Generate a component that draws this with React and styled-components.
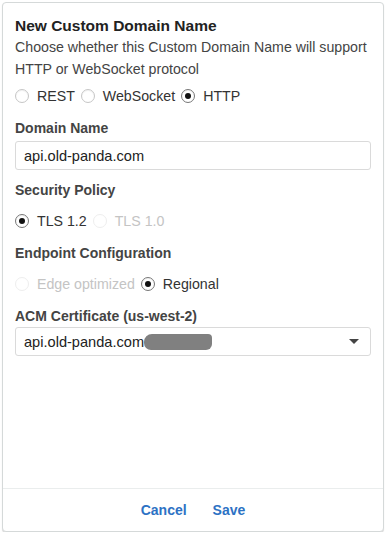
import React from "react";
import styled, { createGlobalStyle } from "styled-components";

const Global = createGlobalStyle`
  html, body { margin: 0; padding: 0; background: #fff; }
  body { font-family: "Liberation Sans", Arial, sans-serif; color: #444; }
`;

const Card = styled.div`
  box-sizing: border-box;
  margin: 2px 0 0 2px;
  width: 382px;
  height: 530px;
  border: 1px solid #d5d9d9;
  border-radius: 4px;
  box-shadow: 0 1px 1px rgba(0,0,0,0.15);
  display: flex;
  flex-direction: column;
  background: #fff;
`;

const Body = styled.div`
  flex: 1;
  padding: 12px 12px 0 12px;
  display: flex;
  flex-direction: column;
`;

const Title = styled.div`
  font-size: 15.5px;
  font-weight: bold;
  color: #222;
  line-height: 22px;
`;

const Desc = styled.div`
  font-size: 14.2px;
  color: #444;
  line-height: 22px;
  margin-top: -1px;
`;

const RadioRow = styled.div`
  display: flex;
  align-items: center;
  height: 20px;
  margin-top: ${p => p.$mt || 0}px;
`;

const RadioItem = styled.label`
  display: flex;
  align-items: center;
  font-size: 14.2px;
  color: ${p => (p.$disabled ? "#c4c4c4" : "#333")};
  margin-right: 6px;
`;

const Circle = styled.span`
  box-sizing: border-box;
  width: 14px;
  height: 14px;
  border-radius: 50%;
  border: 1px solid ${p => (p.$disabled ? "#eee" : p.$checked ? "#777" : "#c6c6c6")};
  background: #fff;
  display: inline-flex;
  align-items: center;
  justify-content: center;
  margin-right: 8px;
  box-shadow: ${p => (p.$disabled ? "none" : "inset 0 1px 1px rgba(0,0,0,0.06)")};
  &::after {
    content: "";
    display: ${p => (p.$checked ? "block" : "none")};
    width: 6px;
    height: 6px;
    border-radius: 50%;
    background: #111;
  }
`;

const Label = styled.div`
  font-size: 14px;
  font-weight: bold;
  color: #444;
  line-height: 18px;
  margin-top: ${p => p.$mt}px;
`;

const Field = styled.div`
  box-sizing: border-box;
  height: 29px;
  margin-top: ${p => p.$mt || 6}px;
  border: 1px solid #dadada;
  border-radius: 3px;
  padding: 0 8px;
  display: flex;
  align-items: center;
  font-size: 14.6px;
  color: #222;
`;

const Redact = styled.span`
  display: inline-block;
  width: 68px;
  height: 16px;
  background: #808080;
  border-radius: 8px 4px 6px 7px;
`;

const Caret = styled.span`
  margin-left: auto;
  margin-right: 3px;
  width: 0;
  height: 0;
  border-left: 5px solid transparent;
  border-right: 5px solid transparent;
  border-top: 5px solid #444;
`;

const Footer = styled.div`
  border-top: 1px solid #eaeded;
  height: 42px;
  display: flex;
  justify-content: center;
  align-items: center;
  gap: 26px;
`;

const LinkButton = styled.button`
  background: none;
  border: none;
  padding: 0;
  font-family: inherit;
  font-size: 14px;
  font-weight: bold;
  color: #2d72c4;
  cursor: pointer;
`;

function Radio({ label, checked, disabled }) {
  return (
    <RadioItem $disabled={disabled}>
      <Circle $checked={checked} $disabled={disabled} />
      {label}
    </RadioItem>
  );
}

export default function App() {
  return (
    <>
      <Global />
      <Card>
        <Body>
          <Title>New Custom Domain Name</Title>
          <Desc>
            Choose whether this Custom Domain Name will support HTTP or WebSocket protocol
          </Desc>
          <RadioRow $mt={6}>
            <Radio label="REST" />
            <Radio label="WebSocket" />
            <Radio label="HTTP" checked />
          </RadioRow>
          <Label $mt={13}>Domain Name</Label>
          <Field $mt={4}>api.old-panda.com</Field>
          <Label $mt={11}>Security Policy</Label>
          <RadioRow $mt={12}>
            <Radio label="TLS 1.2" checked />
            <Radio label="TLS 1.0" disabled />
          </RadioRow>
          <Label $mt={13}>Endpoint Configuration</Label>
          <RadioRow $mt={12}>
            <Radio label="Edge optimized" disabled />
            <Radio label="Regional" checked />
          </RadioRow>
          <Label $mt={13}>ACM Certificate (us-west-2)</Label>
          <Field $mt={2}>
            api.old-panda.com<Redact />
            <Caret />
          </Field>
        </Body>
        <Footer>
          <LinkButton>Cancel</LinkButton>
          <LinkButton>Save</LinkButton>
        </Footer>
      </Card>
    </>
  );
}
